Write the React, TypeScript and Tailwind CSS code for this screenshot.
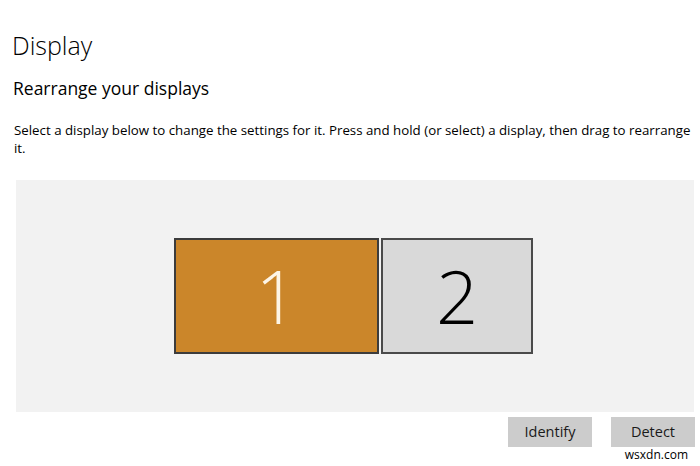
import React from "react";

const font = { fontFamily: '"Open Sans", "Noto Sans", sans-serif' };

const App = () => {
  return (
    <div
      className="w-[700px] h-[466px] bg-white text-black overflow-hidden flex flex-col"
      style={font}
    >
      <h1 className="ml-[12px] mt-[29px] text-[25px] font-light leading-[32px]">
        Display
      </h1>
      <h2 className="ml-[13px] mt-[15px] text-[17.5px] leading-[24px]">
        Rearrange your displays
      </h2>
      <p className="ml-[14px] mt-[21px] text-[13.3px] leading-[18px] w-[690px] whitespace-pre-line">
        {"Select a display below to change the settings for it. Press and hold (or select) a display, then drag to rearrange\nit."}
      </p>

      {/* display canvas */}
      <div className="ml-[16px] mt-[23px] w-[678px] h-[232px] bg-[#f2f2f2] flex items-center justify-center">
        <div className="flex gap-[2px] mr-[3px]">
          <div className="w-[205px] h-[116px] bg-[#cb862a] border-2 border-[#3c3c3c] flex items-center justify-center">
            <span className="text-[74px] font-light text-[#fdf5e6] leading-none">1</span>
          </div>
          <div className="w-[152px] h-[116px] bg-[#d9d9d9] border-2 border-[#4a4a4a] flex items-center justify-center">
            <span className="text-[74px] font-light text-black leading-none">2</span>
          </div>
        </div>
      </div>

      <div className="flex justify-end gap-[19px] mt-[5px] mr-[5px]">
        <button className="w-[84px] h-[30px] bg-[#cccccc] text-[14.5px] text-[#1a1a1a]">
          Identify
        </button>
        <button className="w-[84px] h-[30px] bg-[#cccccc] text-[14.5px] text-[#1a1a1a]">
          Detect
        </button>
      </div>
      <div className="flex justify-end mr-[12px] text-[12px] leading-[14px] mt-[1px]">
        wsxdn.com
      </div>
    </div>
  );
};

export default App;
